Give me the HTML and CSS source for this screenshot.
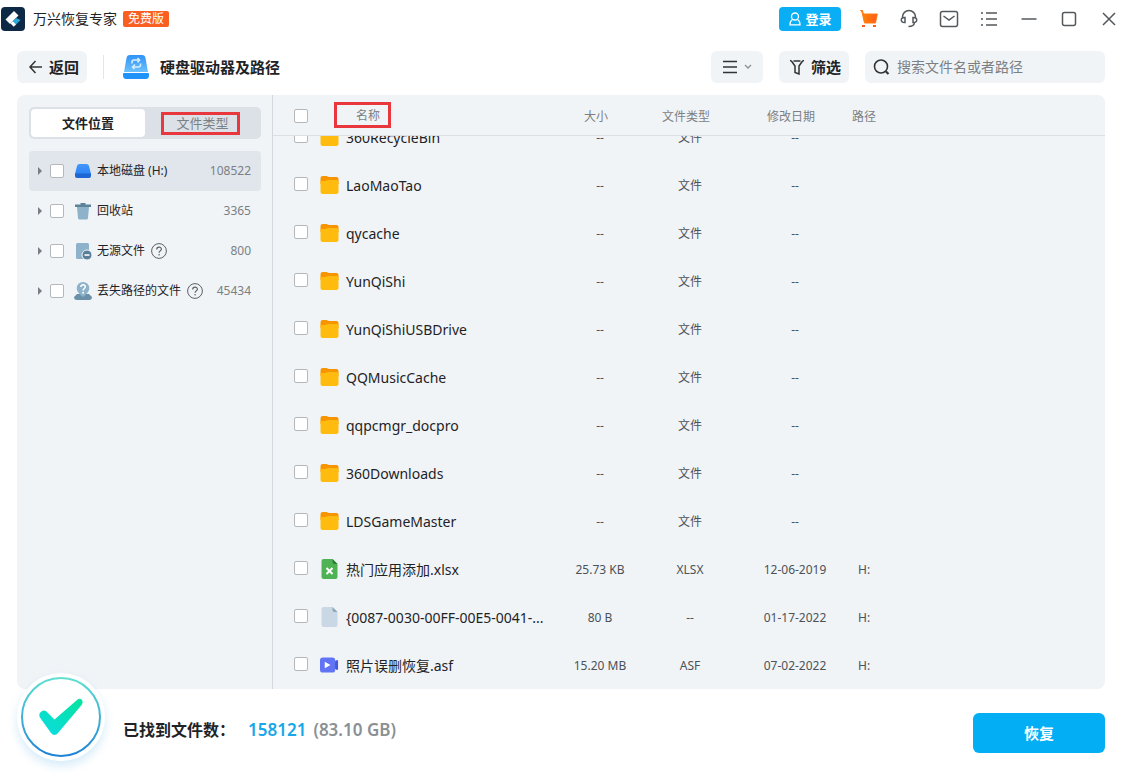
FILE: index.html
```html
<!DOCTYPE html>
<html lang="zh-CN">
<head>
<meta charset="utf-8">
<meta name="viewport" content="width=device-width, initial-scale=1">
<title>万兴恢复专家</title>
<link rel="stylesheet" href="styles.css">
</head>
<body>
<svg class="sprite" aria-hidden="true">
  <defs>
    <linearGradient id="disk-top" x1="0" y1="0" x2="0" y2="1"><stop offset="0" stop-color="#2f92f7"/><stop offset="1" stop-color="#6cc2fb"/></linearGradient>
    <linearGradient id="cart-fill" x1="0" y1="0" x2="1" y2="0"><stop offset="0" stop-color="#ff8a00"/><stop offset="1" stop-color="#ff5a1f"/></linearGradient>
    <linearGradient id="blue-disk" x1="0" y1="0" x2="0" y2="1"><stop offset="0" stop-color="#4596fb"/><stop offset="1" stop-color="#2b83f4"/></linearGradient>
    <linearGradient id="ring" x1="0" y1="0" x2="0" y2="1"><stop offset="0" stop-color="#5fe0d2"/><stop offset="1" stop-color="#1e82d6"/></linearGradient>
    <linearGradient id="tick" x1="1" y1="0" x2="0" y2="1"><stop offset="0" stop-color="#06e39c"/><stop offset="1" stop-color="#0bdce4"/></linearGradient>
  </defs>
  <symbol id="folder" viewBox="0 0 18 18"><path fill="#f79500" d="M0 2a2 2 0 0 1 2-2h4l2.500 1H16a2 2 0 0 1 2 2v5H0z"/><path fill="#ffbc0e" d="M0 5h4.500c1.500 0 2-1 3.500-1H16a2 2 0 0 1 2 2v10a2 2 0 0 1-2 2H2a2 2 0 0 1-2-2z"/></symbol>
  <symbol id="sheet" viewBox="0 0 18 20"><path fill="#4fb356" d="M3 0h9l5 5v13a2 2 0 0 1-2 2H3a2 2 0 0 1-2-2V2a2 2 0 0 1 2-2z"/><path fill="#2d7d38" d="M12 0l5 5h-3a2 2 0 0 1-2-2z"/><path stroke="#fff" stroke-width="2" d="M6 9l6 6M12 9l-6 6"/></symbol>
  <symbol id="blank" viewBox="0 0 18 20"><path fill="#c9d8e4" d="M3 0h9l5 5v13a2 2 0 0 1-2 2H3a2 2 0 0 1-2-2V2a2 2 0 0 1 2-2z"/><path fill="#8da7b8" d="M12 0l5 5h-3a2 2 0 0 1-2-2z"/></symbol>
  <symbol id="video" viewBox="0 0 20 16"><path fill="#4458d8" d="M14 6l3-3h2v10h-2l-3-3z"/><rect width="16" height="16" rx="3" fill="#6274f6"/><path fill="#fff" d="M5 4.500l6 3.500-6 3.500z"/></symbol>
  <symbol id="help" viewBox="0 0 16 16"><circle cx="8" cy="8" r="7.400" fill="none" stroke="#5c6063"/><path d="M5.700 6.400c0-3 4.700-3 4.700-.2 0 1.700-2.300 1.700-2.300 3.500" fill="none" stroke="#5c6063" stroke-width="1.200"/><circle cx="8.100" cy="11.700" r=".8" fill="#5c6063"/></symbol>
  <symbol id="arrow" viewBox="0 0 6 8"><path fill="#777d82" d="M1 0l4 4-4 4z"/></symbol>
</svg>

<div class="app">
  <header class="titlebar">
    <svg class="logo" viewBox="0 0 24 24" aria-hidden="true"><rect width="24" height="24" rx="4" fill="#0d2945"/><path fill="#fff" d="M13 4l4.500 4.500L9 17l-4.500-4.500z"/><path fill="#2ba9dc" d="M15 11l4.500 2-5 5-3-3z"/><path fill="#fff" d="M9.500 16.500l2.300-2.300 3.200 3.200-2.200 2.400z"/></svg>
    <h1 class="app-name">万兴恢复专家</h1>
    <span class="badge">免费版</span>
    <button class="login" type="button"><svg width="14" height="14" viewBox="0 0 14 14" fill="none" stroke="#fff" stroke-width="1.300"><circle cx="7" cy="4.500" r="3.500"/><path d="M4.500 7.500C2.500 8.500 2 10.500 2 12.800h10c0-2.300-.5-4.300-2.500-5.300"/></svg>登录</button>
    <nav class="window-tools" aria-label="窗口">
      <button type="button" aria-label="购物车"><svg width="20" height="20" viewBox="0 0 20 20"><path d="M1.500 1.500h2l.8 3.500h14L16.500 14h-11L3 3z" fill="url(#cart-fill)" stroke="#ff7a10"/><path d="M3 16h3v2H3zM14 16h3v2h-3z" fill="#f9601e"/></svg></button>
      <button type="button" aria-label="客服"><svg class="line" width="20" height="20" viewBox="0 0 20 20"><path d="M3.500 9.500V8a6.500 6.500 0 0 1 13 0v1.500M6 8.500v5c-5 .5-5-5.500 0-5zM14 8.500v5c5 .5 5-5.500 0-5zM15.500 13.500c-.3 3-2.500 4-6 4"/></svg></button>
      <button type="button" aria-label="邮件"><svg class="line" width="20" height="20" viewBox="0 0 20 20"><rect x="1.500" y="2.500" width="17" height="15" rx="2"/><path d="M4.500 7l5.500 4 5.500-4"/></svg></button>
      <button type="button" aria-label="菜单"><svg class="line" width="20" height="20" viewBox="0 0 20 20"><path d="M2 4h2M2 10h2M2 16h2M7 4h11M7 10h11M7 16h11"/></svg></button>
      <button type="button" aria-label="最小化"><svg class="line" width="20" height="20" viewBox="0 0 20 20"><path d="M2.500 10h15"/></svg></button>
      <button type="button" aria-label="最大化"><svg class="line" width="20" height="20" viewBox="0 0 20 20"><rect x="3.500" y="3.500" width="13" height="13" rx="2"/></svg></button>
      <button type="button" aria-label="关闭"><svg class="line" width="20" height="20" viewBox="0 0 20 20"><path d="M4 4l12 12M16 4L4 16"/></svg></button>
    </nav>
  </header>

  <div class="toolbar">
    <button class="tool back" type="button"><svg width="16" height="16" viewBox="0 0 16 16" fill="none" stroke="#333" stroke-width="1.500"><path d="M3 8h12M8.500 2L3 8l5.500 6"/></svg>返回</button>
    <span class="divider"></span>
    <svg class="disk" viewBox="0 0 26 25" aria-hidden="true"><path fill="url(#disk-top)" d="M3.500 3Q4 0 7 0h12q3 0 3.500 3L25 17H1z"/><path fill="#1e93f8" d="M1 18h24q1 0 1 1v1q0 4-3 4H3q-3 0-3-4v-1q0-1 1-1z"/><path d="M9 8.500V7q0-2 2-2h5M14.500 3l2 2-2 2.500M17.500 8.500V10q0 2-2 2h-5M12 9.500L9.500 12l2 2" fill="none" stroke="#d5edff" stroke-width="1.600"/></svg>
    <h2 class="page-title">硬盘驱动器及路径</h2>
    <button class="tool view" type="button" aria-label="视图"><svg width="16" height="16" viewBox="0 0 16 16" stroke="#333" stroke-width="1.500"><path d="M1 2.500h14M1 8h14M1 13.500h14"/></svg><svg width="8" height="6" viewBox="0 0 8 6" fill="none" stroke="#8a8f93" stroke-width="1.300"><path d="M1 1l3 3 3-3"/></svg></button>
    <button class="tool filter" type="button"><svg width="16" height="16" viewBox="0 0 16 16" fill="none" stroke="#333" stroke-width="1.500"><path d="M1 1.500c1 0 1.500.5 2 1.200L6 7v6.500l4 1.500V7l3-4.300c.5-.7 1-1.200 2-1.200M4.500 2h7"/></svg>筛选</button>
    <label class="search"><svg width="18" height="18" viewBox="0 0 18 18" fill="none" stroke="#333" stroke-width="1.600"><circle cx="8" cy="8.500" r="6.500"/><path d="M13 13.500l2.500 2.500" stroke-width="2.200"/></svg><input type="search" placeholder="搜索文件名或者路径" aria-label="搜索"></label>
  </div>

  <main class="panel">
    <aside class="sidebar">
      <div class="tabs" role="tablist">
        <button class="tab active" type="button" role="tab" aria-selected="true">文件位置</button>
        <button class="tab" type="button" role="tab" aria-selected="false"><span class="marked">文件类型</span></button>
      </div>
      <ul class="tree">
        <li class="node selected"><svg class="caret"><use href="#arrow"/></svg><input type="checkbox" class="check" id="n1">
          <svg class="node-icon" viewBox="0 0 18 18"><path fill="url(#blue-disk)" d="M3 4q.5-2 2.500-2h7Q14.500 2 15 4l2 8H1z"/><path fill="#1d66d4" d="M1 11.500h16V14q0 2-2 2H3q-2 0-2-2z"/></svg>
          <label for="n1">本地磁盘 (H:)</label><span class="count">108522</span></li>
        <li class="node"><svg class="caret"><use href="#arrow"/></svg><input type="checkbox" class="check" id="n2">
          <svg class="node-icon" viewBox="0 0 18 18"><path fill="#5d8299" d="M1 2.500h5.500V1h5v1.500H17V5H1z"/><path fill="#8db2c9" d="M3 5h12l-1 11q-.2 1.500-1.500 1.500h-7Q4.200 17.500 4 16z"/></svg>
          <label for="n2">回收站</label><span class="count">3365</span></li>
        <li class="node"><svg class="caret"><use href="#arrow"/></svg><input type="checkbox" class="check" id="n3">
          <svg class="node-icon" viewBox="0 0 18 18"><rect x="2" y="1" width="13" height="16" rx="1.500" fill="#8db2c9"/><circle cx="13" cy="13" r="5" fill="#587f98" stroke="#f0f4f7"/><path stroke="#fff" stroke-width="1.600" d="M10.500 13h5"/></svg>
          <label for="n3">无源文件</label><svg class="help"><use href="#help"/></svg><span class="count">800</span></li>
        <li class="node"><svg class="caret"><use href="#arrow"/></svg><input type="checkbox" class="check" id="n4">
          <svg class="node-icon" viewBox="0 0 18 18"><path fill="#6a91a9" d="M3 12h12l3 3q0 3-3 3H3q-3 0-3-3z"/><path fill="#8db2c9" d="M9 0a6.300 6.300 0 0 1 6.300 6.300C15.300 11 9 15 9 15S2.700 11 2.700 6.300A6.300 6.300 0 0 1 9 0z"/><path d="M6.800 5c0-3 4.700-2.700 4.500 0-.1 1.500-2.200 1.700-2.200 3.500" fill="none" stroke="#fff" stroke-width="1.500"/><circle cx="9.100" cy="10.700" r="1" fill="#fff"/></svg>
          <label for="n4">丢失路径的文件</label><svg class="help"><use href="#help"/></svg><span class="count">45434</span></li>
      </ul>
    </aside>

    <section class="files" id="files">
      <table class="file-table">
        <colgroup><col class="c-check"><col class="c-name"><col class="c-size"><col class="c-type"><col class="c-date"><col></colgroup>
        <thead>
          <tr><th class="pick"><input type="checkbox" class="check" aria-label="全选"></th><th class="name"><span class="marked">名称</span></th><th>大小</th><th>文件类型</th><th>修改日期</th><th class="path">路径</th></tr>
        </thead>
        <tbody>
          <tr><td class="pick"><input type="checkbox" class="check" id="f1"></td><td class="name"><label for="f1"><svg class="icon"><use href="#folder"/></svg>360RecycleBin</label></td><td>--</td><td>文件</td><td>--</td><td class="path"></td></tr>
          <tr><td class="pick"><input type="checkbox" class="check" id="f2"></td><td class="name"><label for="f2"><svg class="icon"><use href="#folder"/></svg>LaoMaoTao</label></td><td>--</td><td>文件</td><td>--</td><td class="path"></td></tr>
          <tr><td class="pick"><input type="checkbox" class="check" id="f3"></td><td class="name"><label for="f3"><svg class="icon"><use href="#folder"/></svg>qycache</label></td><td>--</td><td>文件</td><td>--</td><td class="path"></td></tr>
          <tr><td class="pick"><input type="checkbox" class="check" id="f4"></td><td class="name"><label for="f4"><svg class="icon"><use href="#folder"/></svg>YunQiShi</label></td><td>--</td><td>文件</td><td>--</td><td class="path"></td></tr>
          <tr><td class="pick"><input type="checkbox" class="check" id="f5"></td><td class="name"><label for="f5"><svg class="icon"><use href="#folder"/></svg>YunQiShiUSBDrive</label></td><td>--</td><td>文件</td><td>--</td><td class="path"></td></tr>
          <tr><td class="pick"><input type="checkbox" class="check" id="f6"></td><td class="name"><label for="f6"><svg class="icon"><use href="#folder"/></svg>QQMusicCache</label></td><td>--</td><td>文件</td><td>--</td><td class="path"></td></tr>
          <tr><td class="pick"><input type="checkbox" class="check" id="f7"></td><td class="name"><label for="f7"><svg class="icon"><use href="#folder"/></svg>qqpcmgr_docpro</label></td><td>--</td><td>文件</td><td>--</td><td class="path"></td></tr>
          <tr><td class="pick"><input type="checkbox" class="check" id="f8"></td><td class="name"><label for="f8"><svg class="icon"><use href="#folder"/></svg>360Downloads</label></td><td>--</td><td>文件</td><td>--</td><td class="path"></td></tr>
          <tr><td class="pick"><input type="checkbox" class="check" id="f9"></td><td class="name"><label for="f9"><svg class="icon"><use href="#folder"/></svg>LDSGameMaster</label></td><td>--</td><td>文件</td><td>--</td><td class="path"></td></tr>
          <tr><td class="pick"><input type="checkbox" class="check" id="f10"></td><td class="name"><label for="f10"><svg class="icon doc"><use href="#sheet"/></svg>热门应用添加.xlsx</label></td><td>25.73 KB</td><td>XLSX</td><td>12-06-2019</td><td class="path">H:</td></tr>
          <tr><td class="pick"><input type="checkbox" class="check" id="f11"></td><td class="name"><label for="f11"><svg class="icon doc"><use href="#blank"/></svg>{0087-0030-00FF-00E5-0041-...</label></td><td>80 B</td><td>--</td><td>01-17-2022</td><td class="path">H:</td></tr>
          <tr><td class="pick"><input type="checkbox" class="check" id="f12"></td><td class="name"><label for="f12"><svg class="icon movie"><use href="#video"/></svg>照片误删恢复.asf</label></td><td>15.20 MB</td><td>ASF</td><td>07-02-2022</td><td class="path">H:</td></tr>
        </tbody>
      </table>
    </section>
  </main>

  <footer class="footer">
    <svg class="done" viewBox="0 0 88 88" aria-hidden="true"><circle cx="44" cy="44" r="44" fill="#fff"/><circle cx="44" cy="44" r="39" fill="#fff" stroke="url(#ring)" stroke-width="2"/><path fill="url(#tick)" d="M24 46q-4-5 1-8 3-1.500 5.500 1.500l7 7L60 27q3-2.500 5 0 1.500 2 0 4.500L41 60q-3.500 4-7 0z"/></svg>
    <p class="summary">已找到文件数：<strong class="total">158121</strong><span class="amount">(83.10 GB)</span></p>
    <button class="recover" type="button">恢复</button>
  </footer>
</div>
<script src="app.js"></script>
</body>
</html>
```
FILE: styles.css
```css
* { box-sizing: border-box; }

body {
  margin: 0;
  background: #fff;
  color: #1f2326;
  font: 12px/16px "Noto Sans", "Noto Sans CJK SC", sans-serif;
}

button, input { font: inherit; color: inherit; }
button { border: 0; padding: 0; background: none; cursor: pointer; }
h1, h2, p, ul { margin: 0; padding: 0; }
svg { flex: none; display: block; }
.sprite { position: absolute; width: 0; height: 0; }

.app { display: flex; flex-direction: column; height: 100vh; }

/* Title bar */
.titlebar { display: flex; align-items: center; height: 38px; padding-left: 1px; }
.logo { width: 24px; height: 24px; }
.app-name { margin-left: 8px; font-size: 14px; font-weight: 400; }
.badge { margin-left: 6px; padding: 0 5px; border-radius: 2px; background: #fa5f22; color: #fff; }
.login {
  display: flex; align-items: center; justify-content: center; gap: 3px;
  width: 62px; height: 24px; margin: 0 10px 0 auto;
  border-radius: 4px; background: #0aaef5; color: #fff; font-size: 13px; font-weight: 700;
}
.window-tools { display: flex; gap: 4px; }
.window-tools button { display: grid; place-items: center; width: 36px; height: 38px; }
.line { fill: none; stroke: #54585b; stroke-width: 1.5px; }

/* Toolbar */
.toolbar { display: flex; align-items: center; gap: 16px; padding: 13px 22px 12px 17px; }
.tool {
  display: flex; align-items: center; justify-content: center; gap: 6px;
  height: 32px; border-radius: 6px; background: #f0f4f7; font-size: 15px; font-weight: 700;
}
.back, .filter { width: 70px; padding-left: 2px; }
.view { width: 52px; margin-left: auto; }
.divider { width: 1px; height: 24px; background: #e3e6e8; }
.disk { width: 26px; height: 25px; margin-left: 3px; }
.page-title { margin-left: -5px; font-size: 15px; line-height: 20px; }
.search {
  display: flex; align-items: center; gap: 6px;
  width: 240px; height: 32px; padding: 0 8px; border-radius: 6px; background: #f0f4f7;
}
.search input { flex: 1; min-width: 0; border: 0; padding: 0; outline: 0; background: none; font-size: 14px; }
.search input::placeholder { color: #7b8084; opacity: 1; }

/* Main panel */
.panel {
  display: flex; flex: 1; min-height: 0; margin: 0 22px 0 17px;
  border-radius: 8px; background: #f0f4f7; overflow: hidden;
}
.sidebar { width: 256px; padding: 12px 11px 0 12px; border-right: 1px solid #d3d9de; }
.tabs { display: flex; height: 32px; padding: 2px; border-radius: 5px; background: #dbe1e6; }
.tab { flex: 1; border-radius: 4px; color: #7b8084; font-size: 13px; }
.tab.active { background: #fff; color: #1f2326; font-weight: 700; }
.marked { display: inline-block; border: 3px solid #e8383d; }
.tab .marked { margin-right: 3px; padding: 0 8px 0 12px; line-height: 17px; }

.tree { margin-top: 12px; list-style: none; }
.node { display: flex; align-items: center; height: 40px; padding: 0 10px 0 8px; border-radius: 4px; }
.node.selected { background: #e0e6ec; }
.caret { width: 6px; height: 8px; margin-right: 7px; }
.node-icon { width: 18px; height: 18px; margin: 0 5px 0 10px; }
.help { width: 16px; height: 16px; margin-left: 6px; }
.count { margin-left: auto; color: #7b8084; }

.check {
  appearance: none; display: block; width: 14px; height: 14px; margin: 0;
  border: 1px solid #b4b8bb; border-radius: 2px; background: #fff;
}
.check:checked { background: #0aaef5; border-color: #0aaef5; }

/* File list */
.files { flex: 1; min-width: 0; overflow-y: auto; scrollbar-width: none; }
.file-table { width: 100%; table-layout: fixed; border-spacing: 0; }
.c-check { width: 47px; }
.c-name { width: 240px; }
.c-size { width: 80px; }
.c-type { width: 100px; }
.c-date { width: 110px; }
.file-table th {
  position: sticky; top: 0; z-index: 1; height: 41px; padding: 3px 8px 0 0;
  border-bottom: 1px solid #dbe0e4; background: #f0f4f7; color: #7b8084; font-weight: 400;
}
.file-table td { height: 48px; padding: 0; text-align: center; color: #4c5257; }
.file-table .pick { padding: 2px 0 0 21px; }
.file-table td.pick { padding: 0 0 4px 21px; }
.file-table th.name { padding: 0 0 0 14px; text-align: left; }
.file-table th .marked { padding: 3px 8px 1px 19px; }
.file-table .path { text-align: left; }
.file-table th.path { padding-left: 2px; }
.file-table td.path { padding-left: 8px; }
.name label { display: flex; align-items: center; gap: 7px; color: #1f2326; font-size: 14px; white-space: nowrap; }
.icon { width: 19px; height: 18px; margin-bottom: 2px; }
.icon.doc, .icon.movie { height: 20px; }

/* Footer */
.footer { display: flex; align-items: flex-start; height: 85px; padding: 24px 22px 0 17px; }
.done {
  position: relative; width: 88px; height: 88px; margin-top: -40px;
  border-radius: 50%; box-shadow: 0 5px 10px rgba(30, 150, 220, 0.18);
}
.summary { margin-left: 18px; font-size: 16px; font-weight: 700; line-height: 34px; }
.total { margin-left: 13px; color: #18a7e8; font-size: 17px; font-weight: 600; }
.amount { margin-left: 7px; color: #8b9094; font-size: 17px; font-weight: 600; }
.recover {
  width: 132px; height: 40px; margin-left: auto;
  border-radius: 6px; background: #04aef5; color: #fff; font-size: 15px; font-weight: 700;
}
```
FILE: app.js
```js
document.getElementById("files").scrollTop = 22;
```
